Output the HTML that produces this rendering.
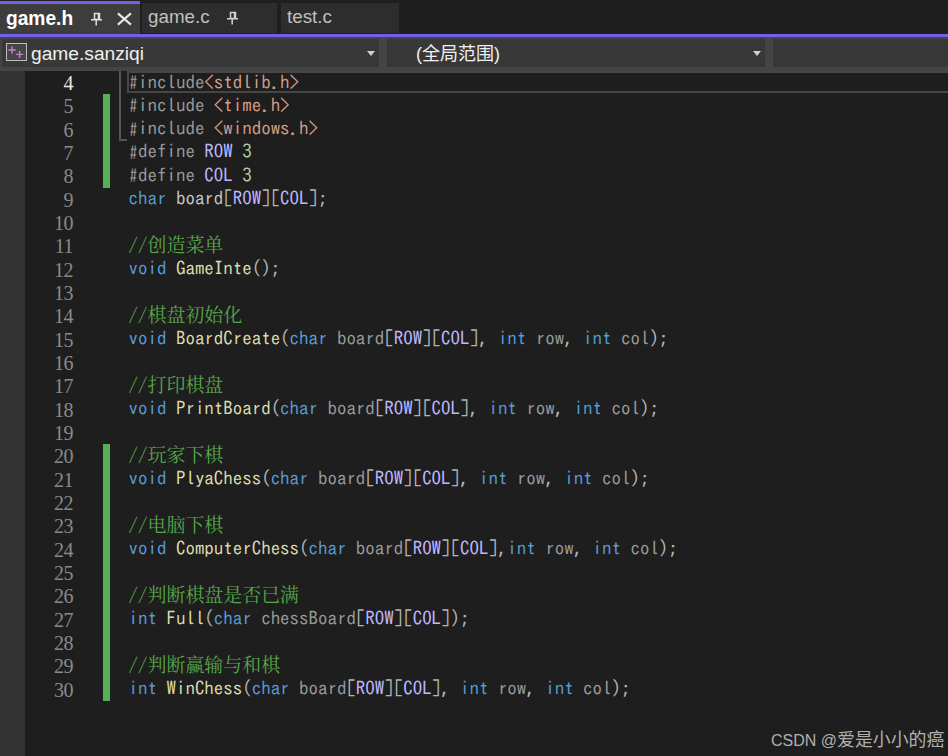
<!DOCTYPE html>
<html lang="zh-CN"><head><meta charset="utf-8"><title>game.h</title>
<style>
html,body{margin:0;padding:0}
body{width:948px;height:756px;overflow:hidden;background:#1e1e1e;position:relative;font-family:"Liberation Sans","Noto Sans CJK SC",sans-serif;color:#dcdcdc}
#tabs{position:absolute;left:0;top:0;width:948px;height:34px;background:#1f1f1f}
.tab{position:absolute;top:3px;height:30px;background:#2d2d2d;color:#c0c0c0;font-size:18.8px;line-height:30px;white-space:nowrap}
.tab.act{top:1px;height:33px;left:0;width:140px;background:#3d3d3d;color:#ffffff;font-weight:bold}
.tab.act:before{content:"";position:absolute;left:0;top:0;width:100%;height:3px;background:#7160e8}
.tab .t{position:absolute;left:6px;top:-1px}
.tab.act .t{font-size:20.4px;left:6px;top:1.5px;display:inline-block;transform:scaleX(.94);transform-origin:0 50%}
#accent{position:absolute;left:0;top:34px;width:948px;height:3px;background:#7160e8}
#nav{position:absolute;left:0;top:37px;width:948px;height:34px;background:#444444}
.dd{position:absolute;top:2px;height:28px;background:#383838;color:#f0f0f0;font-size:18.9px;line-height:28px;white-space:nowrap}
.arr{position:absolute;top:12px;width:0;height:0;border-left:4.7px solid transparent;border-right:4.7px solid transparent;border-top:5px solid #d0d0d0}
#margin{position:absolute;left:0;top:71px;width:25px;height:685px;background:#333333}
#editor{position:absolute;left:0;top:0;width:948px;height:756px;font-family:"IPAGothic","Noto Serif CJK SC",monospace;font-size:18.95px}
.ln{position:absolute;left:25px;width:48px;font-family:"Liberation Serif",serif;font-size:20px;letter-spacing:-0.5px;text-align:right;height:23.33px;line-height:23.33px;color:#8a8a8a;white-space:pre}
.ln.cur{color:#e6e6e6}
.cl{position:absolute;left:128.6px;height:23.33px;line-height:23.33px;white-space:pre;color:#c8c8c8}
.zh{font-family:"Noto Serif CJK SC",serif}
.pp{color:#9b9b9b}.h{display:inline-block;width:9.475px;font-size:15.5px;text-align:center;line-height:1;position:relative;top:-0.5px}.st{color:#d69d85}.mc{color:#beb7ff}.nu{color:#b5cea8}.kw{color:#569cd6}
.gv{color:#c8c8c8}.fn{color:#dcdcaa}.pa{color:#9a9a9a}.op{color:#b4b4b4}.cm{color:#57a64a;position:relative;top:-0.9px}
.gb{position:absolute;left:103px;width:7px;background:#55b155}
#curbox{position:absolute;left:127px;top:71px;width:830px;height:17.5px;border:2px solid #464646}
#ol-v{position:absolute;left:119px;top:71px;width:2px;height:70px;background:#555555}
#ol-h{position:absolute;left:119px;top:139px;width:8px;height:2px;background:#555555}
#wm{position:absolute;left:771px;top:728px;height:24px;line-height:24px;color:#b0b0b0;white-space:nowrap}
#wm .wl{font-size:16px;position:relative;top:-0.5px}
#wm .wc{font-size:17.9px}

</style></head><body>
<div id="tabs">
<div class="tab act"><span class="t">game.h</span>
<svg style="position:absolute;left:90px;top:11px" width="13" height="14" viewBox="0 0 13 14"><path d="M4.5 1.5h5v6h-5z M8.5 1.5v6 M1 7.8h11 M6.2 8v5.5" fill="none" stroke="#e0e0e0" stroke-width="1.5"/></svg>
<svg style="position:absolute;left:116px;top:11px" width="17" height="15" viewBox="0 0 17 15"><path d="M1.9 1.4L14.9 12.6M14.9 1.4L1.9 12.6" fill="none" stroke="#e8e8e8" stroke-width="2.1"/></svg>
</div>
<div class="tab" style="left:142px;width:135px"><span class="t">game.c</span>
<svg style="position:absolute;left:84px;top:8px" width="13" height="14" viewBox="0 0 13 14"><path d="M4.5 1.5h5v6h-5z M8.5 1.5v6 M1 7.8h11 M6.2 8v5.5" fill="none" stroke="#d0d0d0" stroke-width="1.5"/></svg>
</div>
<div class="tab" style="left:281px;width:118px"><span class="t">test.c</span></div>
</div>
<div id="accent"></div>
<div id="nav">
<div class="dd" style="left:2px;width:377px">
<svg style="position:absolute;left:3px;top:3px" width="24" height="21" viewBox="0 0 24 21"><rect x="1.5" y="1.5" width="20" height="17" fill="#464646" stroke="#bdbdbd" stroke-width="1"/><path d="M3.4 8h7.4M7.1 4.3v7.4M10.9 12.4h7.4M14.6 8.7v7.4" stroke="#c77ddb" stroke-width="1.4" fill="none"/></svg>
<span style="position:absolute;left:29px;top:1px;font-size:19.2px">game.sanziqi</span><div class="arr" style="left:365px"></div></div>
<div class="dd" style="left:387px;width:378px"><span style="position:absolute;left:29px;top:1px;font-size:18px">(全局范围)</span><div class="arr" style="left:366px"></div></div>
<div class="dd" style="left:773px;width:175px"></div>
</div>
<div id="margin"></div>
<div class="gb" style="top:94.3px;height:93.5px"></div>
<div class="gb" style="top:444.3px;height:257px"></div>
<div id="ol-v"></div><div id="ol-h"></div>
<div id="curbox"></div>

<div id="editor">
<div class="ln cur" style="top:72.00px">4</div><div class="cl" style="top:69.50px"><span class="pp"><span class="h">#</span>include</span><span class="st">&lt;stdlib.h&gt;</span></div>
<div class="ln" style="top:95.33px">5</div><div class="cl" style="top:92.83px"><span class="pp"><span class="h">#</span>include </span><span class="st">&lt;time.h&gt;</span></div>
<div class="ln" style="top:118.66px">6</div><div class="cl" style="top:116.16px"><span class="pp"><span class="h">#</span>include </span><span class="st">&lt;windows.h&gt;</span></div>
<div class="ln" style="top:141.99px">7</div><div class="cl" style="top:139.49px"><span class="pp"><span class="h">#</span>define </span><span class="mc">ROW</span> <span class="nu">3</span></div>
<div class="ln" style="top:165.32px">8</div><div class="cl" style="top:162.82px"><span class="pp"><span class="h">#</span>define </span><span class="mc">COL</span> <span class="nu">3</span></div>
<div class="ln" style="top:188.65px">9</div><div class="cl" style="top:186.15px"><span class="kw">char</span> <span class="gv">board</span><span class="op">[</span><span class="mc">ROW</span><span class="op">][</span><span class="mc">COL</span><span class="op">];</span></div>
<div class="ln" style="top:211.98px">10</div><div class="cl" style="top:209.48px"></div>
<div class="ln" style="top:235.31px">11</div><div class="cl" style="top:232.81px"><span class="cm">//<span class="zh">创造菜单</span></span></div>
<div class="ln" style="top:258.64px">12</div><div class="cl" style="top:256.14px"><span class="kw">void</span> <span class="fn">GameInte</span><span class="op">();</span></div>
<div class="ln" style="top:281.97px">13</div><div class="cl" style="top:279.47px"></div>
<div class="ln" style="top:305.30px">14</div><div class="cl" style="top:302.80px"><span class="cm">//<span class="zh">棋盘初始化</span></span></div>
<div class="ln" style="top:328.63px">15</div><div class="cl" style="top:326.13px"><span class="kw">void</span> <span class="fn">BoardCreate</span><span class="op">(</span><span class="kw">char</span> <span class="pa">board</span><span class="op">[</span><span class="mc">ROW</span><span class="op">][</span><span class="mc">COL</span><span class="op">], </span><span class="kw">int</span> <span class="pa">row</span><span class="op">, </span><span class="kw">int</span> <span class="pa">col</span><span class="op">);</span></div>
<div class="ln" style="top:351.96px">16</div><div class="cl" style="top:349.46px"></div>
<div class="ln" style="top:375.29px">17</div><div class="cl" style="top:372.79px"><span class="cm">//<span class="zh">打印棋盘</span></span></div>
<div class="ln" style="top:398.62px">18</div><div class="cl" style="top:396.12px"><span class="kw">void</span> <span class="fn">PrintBoard</span><span class="op">(</span><span class="kw">char</span> <span class="pa">board</span><span class="op">[</span><span class="mc">ROW</span><span class="op">][</span><span class="mc">COL</span><span class="op">], </span><span class="kw">int</span> <span class="pa">row</span><span class="op">, </span><span class="kw">int</span> <span class="pa">col</span><span class="op">);</span></div>
<div class="ln" style="top:421.95px">19</div><div class="cl" style="top:419.45px"></div>
<div class="ln" style="top:445.28px">20</div><div class="cl" style="top:442.78px"><span class="cm">//<span class="zh">玩家下棋</span></span></div>
<div class="ln" style="top:468.61px">21</div><div class="cl" style="top:466.11px"><span class="kw">void</span> <span class="fn">PlyaChess</span><span class="op">(</span><span class="kw">char</span> <span class="pa">board</span><span class="op">[</span><span class="mc">ROW</span><span class="op">][</span><span class="mc">COL</span><span class="op">], </span><span class="kw">int</span> <span class="pa">row</span><span class="op">, </span><span class="kw">int</span> <span class="pa">col</span><span class="op">);</span></div>
<div class="ln" style="top:491.94px">22</div><div class="cl" style="top:489.44px"></div>
<div class="ln" style="top:515.27px">23</div><div class="cl" style="top:512.77px"><span class="cm">//<span class="zh">电脑下棋</span></span></div>
<div class="ln" style="top:538.60px">24</div><div class="cl" style="top:536.10px"><span class="kw">void</span> <span class="fn">ComputerChess</span><span class="op">(</span><span class="kw">char</span> <span class="pa">board</span><span class="op">[</span><span class="mc">ROW</span><span class="op">][</span><span class="mc">COL</span><span class="op">],</span><span class="kw">int</span> <span class="pa">row</span><span class="op">, </span><span class="kw">int</span> <span class="pa">col</span><span class="op">);</span></div>
<div class="ln" style="top:561.93px">25</div><div class="cl" style="top:559.43px"></div>
<div class="ln" style="top:585.26px">26</div><div class="cl" style="top:582.76px"><span class="cm">//<span class="zh">判断棋盘是否已满</span></span></div>
<div class="ln" style="top:608.59px">27</div><div class="cl" style="top:606.09px"><span class="kw">int</span> <span class="fn">Full</span><span class="op">(</span><span class="kw">char</span> <span class="pa">chessBoard</span><span class="op">[</span><span class="mc">ROW</span><span class="op">][</span><span class="mc">COL</span><span class="op">]);</span></div>
<div class="ln" style="top:631.92px">28</div><div class="cl" style="top:629.42px"></div>
<div class="ln" style="top:655.25px">29</div><div class="cl" style="top:652.75px"><span class="cm">//<span class="zh">判断赢输与和棋</span></span></div>
<div class="ln" style="top:678.58px">30</div><div class="cl" style="top:676.08px"><span class="kw">int</span> <span class="fn">WinChess</span><span class="op">(</span><span class="kw">char</span> <span class="pa">board</span><span class="op">[</span><span class="mc">ROW</span><span class="op">][</span><span class="mc">COL</span><span class="op">], </span><span class="kw">int</span> <span class="pa">row</span><span class="op">, </span><span class="kw">int</span> <span class="pa">col</span><span class="op">);</span></div>
</div>
<div id="wm"><span class="wl">CSDN @</span><span class="wc">爱是小小的癌</span></div>
</body></html>
